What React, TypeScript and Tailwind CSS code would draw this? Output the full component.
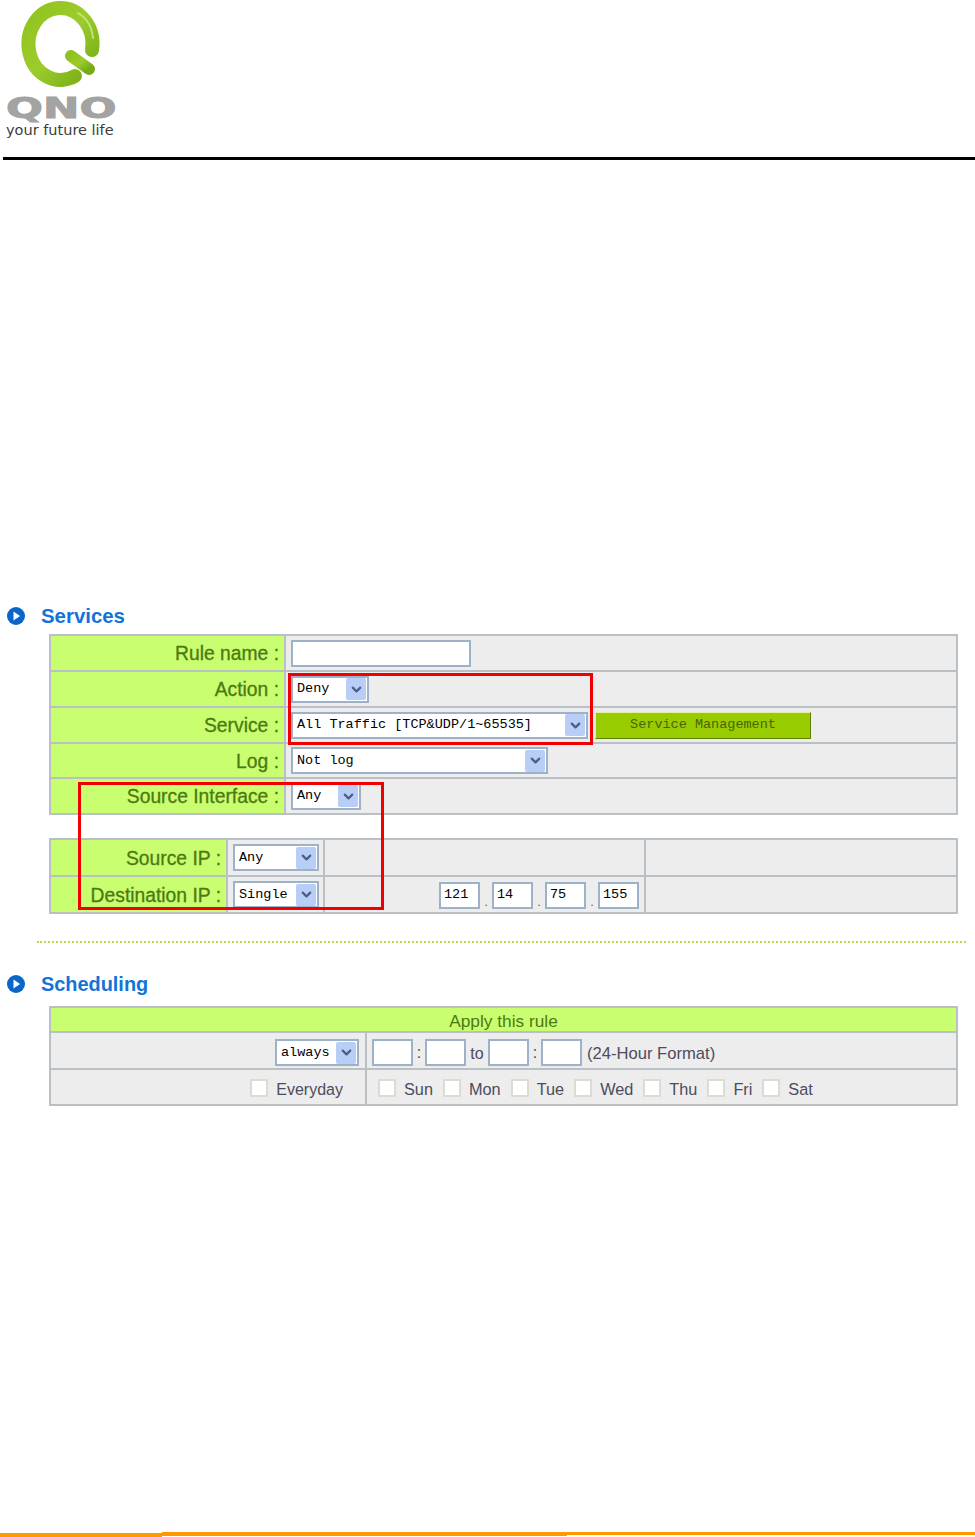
import type { ReactNode } from 'react'
import { ChevronDown } from 'lucide-react'

const sans = { fontFamily: '"Liberation Sans", Arial, sans-serif' }
const mono = { fontFamily: '"Liberation Mono", monospace' }

function Logo() {
  return (
    <div className="w-[120px] h-[157px] relative">
      <svg width="120" height="92" viewBox="0 0 120 92" className="block">
        <defs>
          <linearGradient id="q" x1="0" y1="0" x2="1" y2="1">
            <stop offset="0" stopColor="#8fc31f" />
            <stop offset="0.5" stopColor="#9ccc2c" />
            <stop offset="1" stopColor="#76ab14" />
          </linearGradient>
        </defs>
        <path d="M92 50 A32 36 0 1 0 75 76" fill="none" stroke="url(#q)" strokeWidth="14" strokeLinecap="round" />
        <path d="M71 56 L89 69" fill="none" stroke="url(#q)" strokeWidth="12" strokeLinecap="round" />
        <path d="M78 13 A28 32 0 0 1 93 38" fill="none" stroke="#c5e27a" strokeWidth="2" strokeLinecap="round" />
      </svg>
      <div
        className="absolute left-[6px] top-[90px] text-[30px] leading-[36px] font-bold text-[#a3a3a3] origin-left scale-x-[1.45] scale-y-[0.95] whitespace-nowrap [-webkit-text-stroke:1px_#a3a3a3]"
        style={{ fontFamily: '"DejaVu Sans", sans-serif' }}
      >
        QNO
      </div>
      <div className="absolute left-[6px] top-[121px] text-[14.5px] leading-[18px] text-[#3c3c3c] whitespace-nowrap" style={{ fontFamily: '"DejaVu Sans", sans-serif' }}>
        your future life
      </div>
    </div>
  )
}

function Bullet() {
  return (
    <svg width="18" height="18" viewBox="0 0 18 18" className="block">
      <circle cx="9" cy="9" r="9" fill="#0a66c8" />
      <path d="M6.5 4.5 L13 9 L6.5 13.5 Z" fill="#fff" />
    </svg>
  )
}

function Heading({ children, size }: { children: string; size: string }) {
  return (
    <div className="flex items-center h-[18px] pl-[7px]">
      <Bullet />
      <span className={`ml-[16px] ${size} leading-[18px] font-bold text-[#1473d6]`} style={sans}>
        {children}
      </span>
    </div>
  )
}

function Select({ label, w }: { label: string; w: string }) {
  return (
    <div className={`${w} h-[27px] shrink-0 bg-white border-2 border-[#9db2c9] flex items-center justify-between pl-[4px] pr-[1px]`}>
      <span className="text-[13.5px] leading-none text-black whitespace-nowrap" style={mono}>
        {label}
      </span>
      <span className="w-[20px] h-[22px] bg-[#b9cef6] rounded-[2px] flex items-center justify-center">
        <ChevronDown size={15} strokeWidth={3.5} className="text-[#4a5f85]" />
      </span>
    </div>
  )
}

function Input({ w = 'w-[41px]', value }: { w?: string; value?: string }) {
  return (
    <div className={`${w} h-[27px] shrink-0 bg-white border-2 border-[#9db2c9] flex items-center pl-[3px] text-[13.5px] text-black`} style={mono}>
      {value}
    </div>
  )
}

function Check({ label, size = 'text-[16.3px]' }: { label: string; size?: string }) {
  return (
    <div className="flex items-center gap-[8px]">
      <span className="w-[18px] h-[18px] bg-white border-2 border-[#dcdcd2]" />
      <span className={`mt-[3px] ${size} text-[#4c4c5c]`}>{label}</span>
    </div>
  )
}

function Label({ children, last }: { children: string; last?: boolean }) {
  return (
    <div className={`bg-[#c8fe70] flex items-center justify-end pr-[5px] pt-[3px] text-[19.3px] text-[#4d7a10] border-r-2 border-[#b9c0c6] [-webkit-text-stroke:0.3px_#4d7a10] ${last ? '' : 'border-b-2'}`}>
      {children}
    </div>
  )
}

function Cell({ children, last }: { children?: ReactNode; last?: boolean }) {
  return (
    <div className={`bg-[#ededed] flex items-center pl-[5px] border-[#b9c0c6] ${last ? '' : 'border-b-2'}`}>
      {children}
    </div>
  )
}

function Dot() {
  return <span className="w-[12px] self-end pb-[1px] text-center text-[13px] text-[#666]">.</span>
}

export default function App() {
  return (
    <div className="w-[975px] h-[1537px] bg-white flex flex-col overflow-hidden" style={sans}>
      <header className="h-[160px] shrink-0 border-b-[3px] border-black ml-[3px]">
        <div className="-ml-[3px]">
          <Logo />
        </div>
      </header>

      <main className="pt-[447px] flex-1">
        <Heading size="text-[20.4px]">Services</Heading>

        <div className="relative ml-[49px] w-[909px] mt-[9px]">
          <div className="grid grid-cols-[235px_1fr] grid-rows-[36px_36px_36px_35px_34px] border-2 border-[#b9c0c6] h-[181px]">
            <Label>Rule name :</Label>
            <Cell>
              <Input w="w-[180px]" />
            </Cell>
            <Label>Action :</Label>
            <Cell>
              <Select label="Deny" w="w-[78px]" />
            </Cell>
            <Label>Service :</Label>
            <Cell>
              <Select label="All Traffic [TCP&UDP/1~65535]" w="w-[297px]" />
              <button
                className="ml-[7px] w-[216px] h-[27px] bg-[#99cc00] border border-t-[#dff0a0] border-l-[#dff0a0] border-r-[#5f7f00] border-b-[#5f7f00] text-[13.5px] text-[#4a6400]"
                style={mono}
              >
                Service Management
              </button>
            </Cell>
            <Label>Log :</Label>
            <Cell>
              <Select label="Not log" w="w-[257px]" />
            </Cell>
            <Label last>Source Interface :</Label>
            <Cell last>
              <Select label="Any" w="w-[70px]" />
            </Cell>
          </div>

          <div className="mt-[23px] grid grid-cols-[177px_95px_323px_1fr] grid-rows-[37px_35px] border-2 border-[#b9c0c6] h-[76px]">
            <Label>Source IP :</Label>
            <Cell>
              <Select label="Any" w="w-[86px]" />
            </Cell>
            <div className="bg-[#ededed] border-x-2 border-b-2 border-[#b9c0c6]" />
            <div className="bg-[#ededed] border-b-2 border-[#b9c0c6]" />
            <Label last>Destination IP :</Label>
            <Cell last>
              <Select label="Single" w="w-[86px]" />
            </Cell>
            <div className="bg-[#ededed] border-x-2 border-[#b9c0c6] flex items-center pl-[114px] pt-[1px]">
              <Input value="121" />
              <Dot />
              <Input value="14" />
              <Dot />
              <Input value="75" />
              <Dot />
              <Input value="155" />
            </div>
            <div className="bg-[#ededed]" />
          </div>

          {/* red marks over the form */}
          <div className="absolute left-[239px] top-[39px] w-[305px] h-[72px] border-[3px] border-[#f00000]" />
          <div className="absolute left-[29px] top-[148px] w-[306px] h-[128px] border-[3px] border-[#f00000]" />
        </div>

        <div className="ml-[37px] w-[929px] mt-[27px] border-t-2 border-dotted border-[#b5d94a]" />

        <div className="mt-[32px]">
          <Heading size="text-[19.9px]">Scheduling</Heading>
        </div>

        <div className="ml-[49px] w-[909px] mt-[13px] border-2 border-[#b9c0c6]">
          <div className="h-[25px] bg-[#c8fe70] border-b-2 border-[#b9c0c6] flex items-end justify-center text-[17.3px] leading-[19px] text-[#4d7a10]">
            Apply this rule
          </div>
          <div className="grid grid-cols-[316px_1fr] grid-rows-[37px_34px]">
            <div className="bg-[#ededed] border-r-2 border-b-2 border-[#b9c0c6] flex items-center justify-end pr-[6px] pt-[4px]">
              <Select label="always" w="w-[84px]" />
            </div>
            <div className="bg-[#ededed] border-b-2 border-[#b9c0c6] flex items-center pl-[5px] pt-[4px] text-[16px] text-[#4c4c5c]">
              <Input />
              <span className="w-[12px] text-center">:</span>
              <Input />
              <span className="w-[22px] mt-[3px] text-center">to</span>
              <Input />
              <span className="w-[12px] text-center">:</span>
              <Input />
              <span className="ml-[5px] mt-[3px] text-[16.6px]">(24-Hour Format)</span>
            </div>
            <div className="bg-[#ededed] border-r-2 border-[#b9c0c6] flex items-center justify-end pr-[22px] pt-[2px]">
              <Check label="Everyday" size="text-[16px]" />
            </div>
            <div className="bg-[#ededed] flex items-center pl-[11px] pt-[2px] gap-[10px]">
              <Check label="Sun" />
              <Check label="Mon" />
              <Check label="Tue" />
              <Check label="Wed" />
              <Check label="Thu" />
              <Check label="Fri" />
              <Check label="Sat" />
            </div>
          </div>
        </div>
      </main>

      <footer className="h-[5px] shrink-0 flex items-start">
        <div className="w-[162px] h-[4px] mt-[1px] bg-[#ff9900]" />
        <div className="w-[405px] h-[4px] bg-[#ff9900]" />
        <div className="flex-1 h-[3px] bg-[#ff9900]" />
      </footer>
    </div>
  )
}
